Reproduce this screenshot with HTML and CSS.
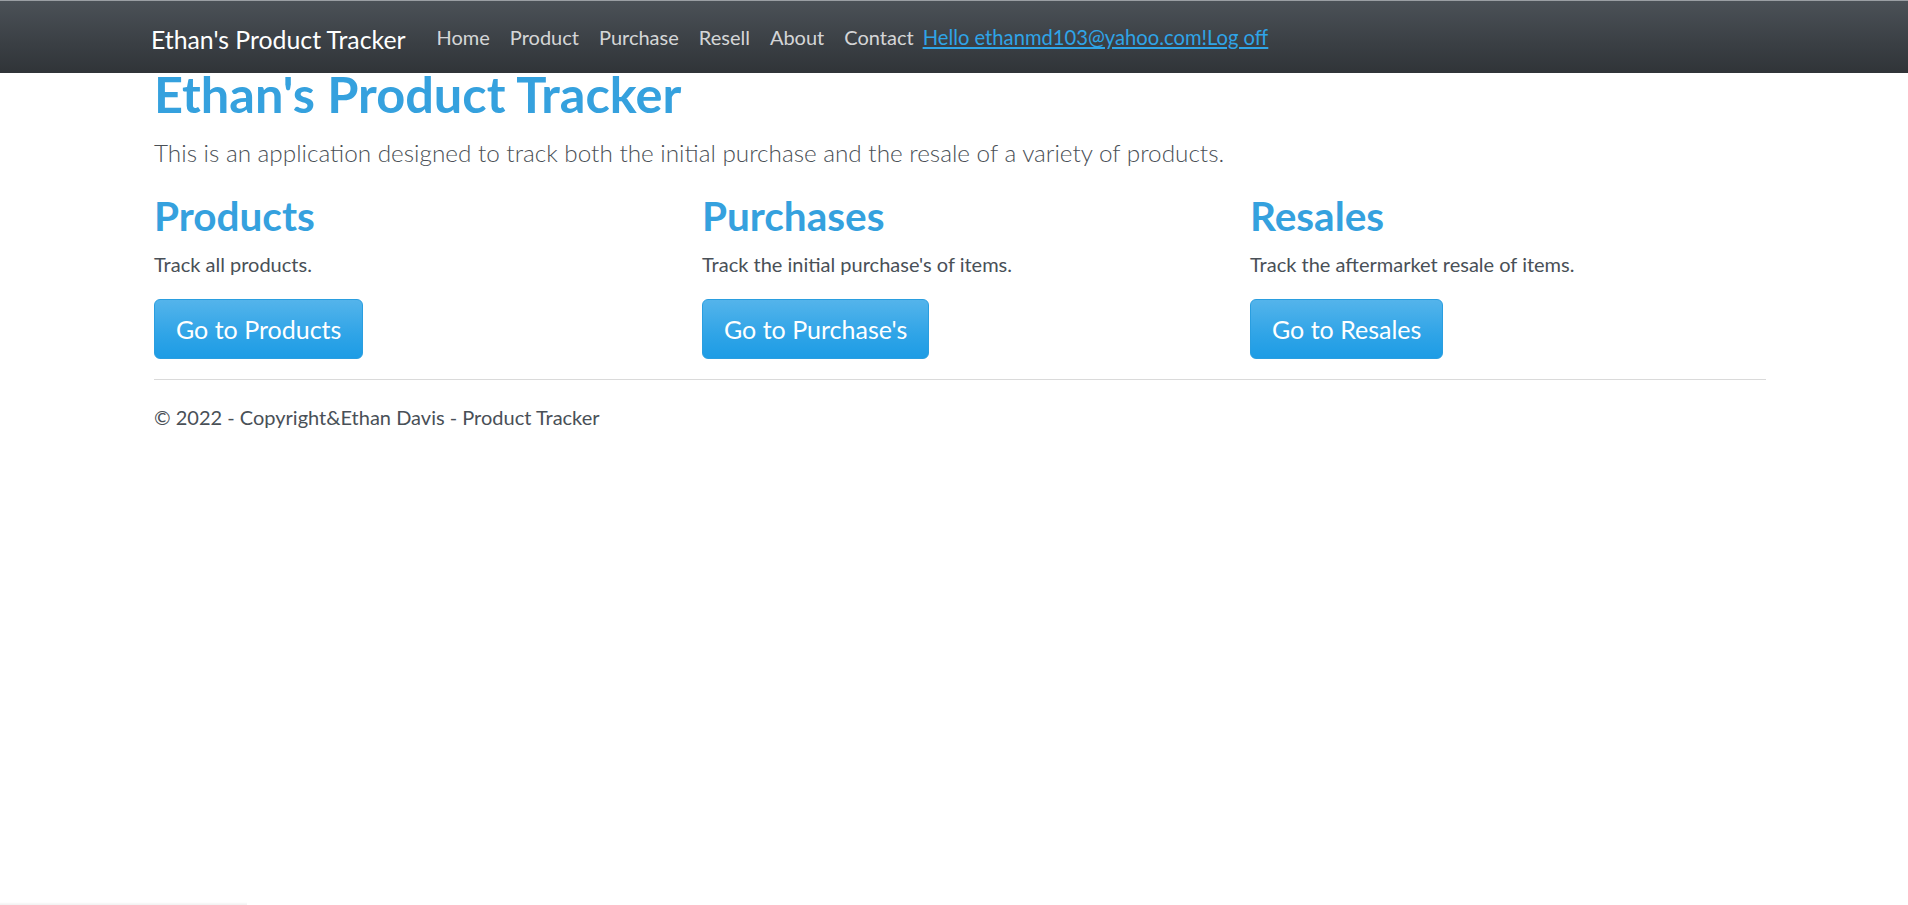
FILE: index.html
```html
<!DOCTYPE html>
<html lang="en">
<head>
<meta charset="utf-8">
<title>Home Page - Ethan's Product Tracker</title>
<link rel="stylesheet" href="styles.css">
</head>
<body>
<header class="navbar">
  <div class="navbar-inner">
    <a class="brand" href="#">Ethan's Product Tracker</a>
    <nav class="nav">
      <a class="nav-link" href="#">Home</a>
      <a class="nav-link" href="#">Product</a>
      <a class="nav-link" href="#">Purchase</a>
      <a class="nav-link" href="#">Resell</a>
      <a class="nav-link" href="#">About</a>
      <a class="nav-link" href="#">Contact</a>
    </nav>
    <a class="user-link" href="#">Hello ethanmd103@yahoo.com!Log off</a>
  </div>
</header>
<main class="container">
  <h1 class="title">Ethan's Product Tracker</h1>
  <p class="lead">This is an application designed to track both the initial purchase and the resale of a variety of products.</p>
  <div class="row">
    <section class="col">
      <h2 class="col-title">Products</h2>
      <p class="col-text">Track all products.</p>
      <a class="btn" href="#">Go to Products</a>
    </section>
    <section class="col">
      <h2 class="col-title">Purchases</h2>
      <p class="col-text">Track the initial purchase's of items.</p>
      <a class="btn" href="#">Go to Purchase's</a>
    </section>
    <section class="col">
      <h2 class="col-title">Resales</h2>
      <p class="col-text">Track the aftermarket resale of items.</p>
      <a class="btn" href="#">Go to Resales</a>
    </section>
  </div>
  <hr class="divider">
  <footer class="footer">
    <p class="footer-text">&copy; 2022 - Copyright&amp;Ethan Davis - Product Tracker</p>
  </footer>
</main>
<div class="status-shadow"></div>
</body>
</html>
```

FILE: styles.css
```css
* { box-sizing: border-box; }

html, body {
  margin: 0;
  padding: 0;
  background: #ffffff;
}

body {
  font-family: Lato, "Open Sans", sans-serif;
  color: #495057;
  font-size: 20px;
  line-height: 32px;
}

.navbar {
  height: 73px;
  border-top: 1px solid #9a9ea3;
  background-image: linear-gradient(#4b5157, #3a3f44 60%, #303438);
}

.navbar-inner {
  height: 72px;
  display: flex;
  align-items: center;
  padding-left: 151px;
}

.brand {
  font-size: 24.8px;
  line-height: 40px;
  color: #ffffff;
  text-decoration: none;
  margin-right: 21px;
  padding-top: 6px;
}

.nav {
  display: flex;
  align-items: center;
}

.nav-link {
  font-size: 20px;
  line-height: 32px;
  color: rgba(255, 255, 255, 0.8);
  text-decoration: none;
  padding: 0 10px;
}

.nav-link:last-child {
  padding-right: 9px;
}

.user-link {
  font-size: 20.2px;
  line-height: 32px;
  color: #2fa4e7;
  text-decoration: underline;
}

.container {
  width: 1612px;
  margin-left: 154px;
}

.title {
  margin: 1px 0 0 0;
  font-size: 50.5px;
  line-height: 40px;
  font-weight: 700;
  color: #35a1de;
}

.lead {
  margin: 19px 0 0 0;
  font-size: 24.3px;
  line-height: 40px;
  font-weight: 300;
  color: #4a5056;
}

.row {
  display: grid;
  grid-template-columns: repeat(3, 1fr);
  column-gap: 32px;
  margin-top: 18px;
}

.col {
  display: flex;
  flex-direction: column;
  align-items: flex-start;
}

.col-title {
  margin: 0;
  font-size: 40.5px;
  line-height: 50px;
  font-weight: 700;
  color: #35a1de;
}

.col-text {
  margin: 7px 0 0 0;
  font-size: 20px;
  line-height: 32px;
}

.btn {
  margin-top: 19px;
  display: inline-block;
  font-size: 25px;
  line-height: 40px;
  padding: 9px 21px;
  border: 1px solid #2a9ee0;
  border-radius: 6px;
  color: #ffffff;
  text-decoration: none;
  background-image: linear-gradient(#54b4eb, #2fa4e7 60%, #1d9ce5);
}

.divider {
  margin: 20px 0 0 0;
  border: 0;
  border-top: 1px solid #dadada;
  height: 0;
}

.footer-text {
  margin: 21px 0 0 0;
  font-size: 20px;
  line-height: 32px;
}

.status-shadow {
  position: fixed;
  left: 0;
  bottom: 0;
  width: 247px;
  height: 3px;
  background: linear-gradient(rgba(0,0,0,0), rgba(0,0,0,0.06));
}
```
